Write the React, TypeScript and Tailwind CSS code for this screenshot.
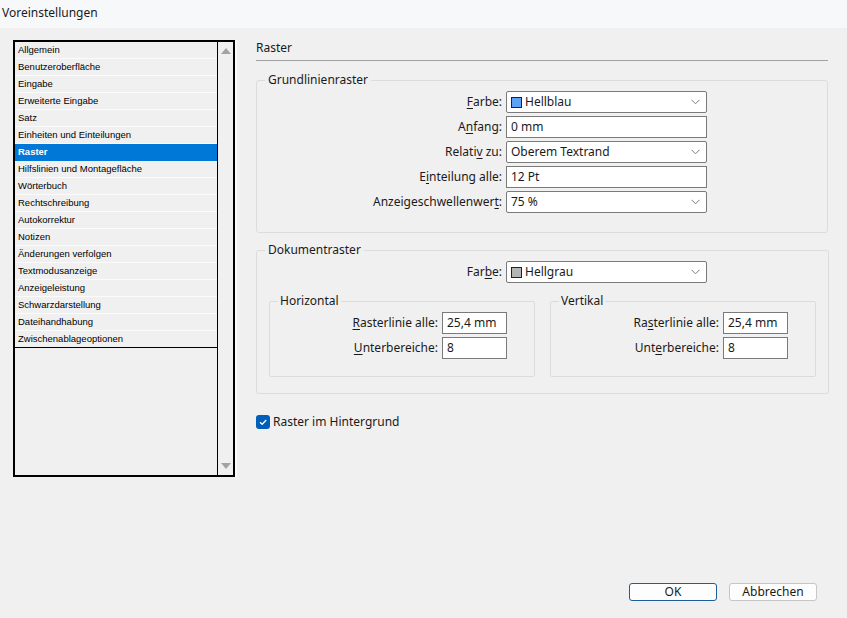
import React from 'react';

const listItems = [
  'Allgemein',
  'Benutzeroberfläche',
  'Eingabe',
  'Erweiterte Eingabe',
  'Satz',
  'Einheiten und Einteilungen',
  'Raster',
  'Hilfslinien und Montagefläche',
  'Wörterbuch',
  'Rechtschreibung',
  'Autokorrektur',
  'Notizen',
  'Änderungen verfolgen',
  'Textmodusanzeige',
  'Anzeigeleistung',
  'Schwarzdarstellung',
  'Dateihandhabung',
  'Zwischenablageoptionen',
];

function Chevron() {
  return (
    <svg width="9" height="6" viewBox="0 0 9 6" className="ml-auto mr-[6px] shrink-0">
      <path d="M0.5 0.8 L4.5 4.8 L8.5 0.8" fill="none" stroke="#7a7a7a" strokeWidth="1" />
    </svg>
  );
}

// label with one underlined mnemonic letter
function Label({ before, key_, after }: { before: string; key_: string; after: string }) {
  return (
    <span>
      {before}
      <span className="underline underline-offset-2">{key_}</span>
      {after}
    </span>
  );
}

function Select({ children, swatch }: { children: React.ReactNode; swatch?: string }) {
  return (
    <div className="flex items-center h-[22px] w-[201px] bg-white border border-[#7a7a7a] rounded-[2px] pl-[4px]">
      {swatch && <span className="w-[11px] h-[11px] border border-[#222] mr-[3px] shrink-0" style={{ background: swatch }} />}
      <span>{children}</span>
      <Chevron />
    </div>
  );
}

function Input({ value, w = 'w-[201px]' }: { value: string; w?: string }) {
  return (
    <div className={`flex items-center h-[22px] ${w} bg-white border border-[#7a7a7a] pl-[4px]`}>{value}</div>
  );
}

export default function App() {
  return (
    <div
      className="w-[847px] h-[618px] bg-[#f0f0f0] flex flex-col text-[12px] text-[#1a1a1a] overflow-hidden"
      style={{ fontFamily: '"Noto Sans", "Open Sans", sans-serif' }}
    >
      <div className="h-[28px] bg-[#f7f8fa] flex items-center pl-[2px] pb-[2px]">Voreinstellungen</div>

      <div className="flex flex-1 pt-[12px] pl-[13px]">
        {/* category list */}
        <div className="flex h-[437px] w-[224px] shrink-0">
          <div className="flex flex-col w-[205px] border-l-2 border-t-2 border-b-2 border-r border-black" style={{ fontFamily: '"Liberation Sans", Arial, sans-serif' }}>
            {listItems.map((item, i) => (
              <div
                key={item}
                className={`h-[17px] flex items-center pl-[3px] text-[9.5px] ${
                  item === 'Raster' ? 'bg-[#0078d7] text-white font-bold border-b border-[#0078d7]' : 'text-black border-b border-[#fbfbfb]'
                } ${i === listItems.length - 1 ? 'border-b-black' : ''}`}
              >
                {item}
              </div>
            ))}
          </div>
          <div className="w-[17px] flex flex-col justify-between items-center border-t-2 border-b-2 border-r-2 border-black py-[6px]">
            <svg width="10" height="6" viewBox="0 0 10 6"><path d="M5 0 L10 6 L0 6 Z" fill="#a3a3a3" /></svg>
            <svg width="10" height="6" viewBox="0 0 10 6"><path d="M0 0 L10 0 L5 6 Z" fill="#a3a3a3" /></svg>
          </div>
          <div className="w-[2px] bg-[#fafafa]" />
        </div>

        {/* settings panel */}
        <div className="ml-[19px] w-[572px] flex flex-col">
          <div className="h-[21px] border-b border-[#a0a0a0] flex items-end pb-[3px] pt-[2px]">Raster</div>

          <fieldset className="mt-[11px] border border-[#dcdcdc] rounded-[3px] pb-[19px]">
            <legend className="ml-[8px] px-[3px] leading-[16px]">Grundlinienraster</legend>
            <div className="flex flex-col gap-[3px] pt-[3px]">
              <div className="flex items-center">
                <div className="w-[249px] text-right pr-[4px]"><Label before="" key_="F" after="arbe:" /></div>
                <Select swatch="#5ea0f5">Hellblau</Select>
              </div>
              <div className="flex items-center">
                <div className="w-[249px] text-right pr-[4px]"><Label before="A" key_="n" after="fang:" /></div>
                <Input value="0 mm" />
              </div>
              <div className="flex items-center">
                <div className="w-[249px] text-right pr-[4px]"><Label before="Relati" key_="v" after=" zu:" /></div>
                <Select>Oberem Textrand</Select>
              </div>
              <div className="flex items-center">
                <div className="w-[249px] text-right pr-[4px]"><Label before="E" key_="i" after="nteilung alle:" /></div>
                <Input value="12 Pt" />
              </div>
              <div className="flex items-center">
                <div className="w-[249px] text-right pr-[4px]"><Label before="Anzeigeschwellenwer" key_="t" after=":" /></div>
                <Select>75 %</Select>
              </div>
            </div>
          </fieldset>

          <fieldset className="mt-[9px] border border-[#dcdcdc] rounded-[3px] pb-[16px]">
            <legend className="ml-[8px] px-[3px] leading-[16px]">Dokumentraster</legend>
            <div className="flex items-center pt-[3px]">
              <div className="w-[249px] text-right pr-[4px]"><Label before="Far" key_="b" after="e:" /></div>
              <Select swatch="#b4b4b4">Hellgrau</Select>
            </div>
            <div className="flex gap-[15px] px-[12px] mt-[10px]">
              {[
                { title: 'Horizontal', a: ['', 'R', 'asterlinie alle:'], b: ['', 'U', 'nterbereiche:'] },
                { title: 'Vertikal', a: ['Ra', 's', 'terlinie alle:'], b: ['Unt', 'e', 'rbereiche:'] },
              ].map((g) => (
                <fieldset key={g.title} className="w-[266px] border border-[#dcdcdc] rounded-[2px] pb-[17px]">
                  <legend className="ml-[8px] px-[2px] leading-[16px]">{g.title}</legend>
                  <div className="flex flex-col gap-[3px] pt-[3px]">
                    <div className="flex items-center">
                      <div className="w-[172px] text-right pr-[4px]"><Label before={g.a[0]} key_={g.a[1]} after={g.a[2]} /></div>
                      <Input value="25,4 mm" w="w-[65px]" />
                    </div>
                    <div className="flex items-center">
                      <div className="w-[172px] text-right pr-[4px]"><Label before={g.b[0]} key_={g.b[1]} after={g.b[2]} /></div>
                      <Input value="8" w="w-[65px]" />
                    </div>
                  </div>
                </fieldset>
              ))}
            </div>
          </fieldset>

          <div className="flex items-center mt-[19px] gap-[3px]">
            <span className="w-[14px] h-[14px] rounded-[3px] bg-[#005fb8] flex items-center justify-center">
              <svg width="10" height="10" viewBox="0 0 10 10"><path d="M2 5.2 L4.2 7.3 L8.2 3" fill="none" stroke="white" strokeWidth="1.3" /></svg>
            </span>
            <span>Raster im Hintergrund</span>
          </div>

          <div className="mt-auto mb-[17px] flex justify-end gap-[12px] pr-[11px]">
            <button className="w-[88px] h-[18px] bg-[#fdfdfd] border border-[#1f5d99] rounded-[3px] leading-none">OK</button>
            <button className="w-[88px] h-[18px] bg-[#fdfdfd] border border-[#c6c6c6] rounded-[3px] leading-none">Abbrechen</button>
          </div>
        </div>
      </div>
    </div>
  );
}
